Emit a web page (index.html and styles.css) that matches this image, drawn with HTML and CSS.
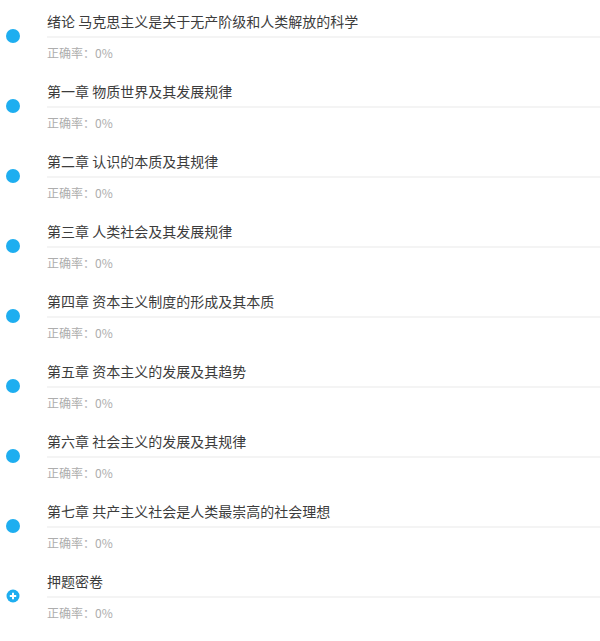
FILE: index.html
```html
<!DOCTYPE html>
<html lang="zh">
<head>
<meta charset="utf-8">
<link rel="stylesheet" href="styles.css">
</head>
<body>
<ul class="list">
  <li class="row"><span class="mark"><span class="dot"></span></span><div class="body"><div class="title">绪论 马克思主义是关于无产阶级和人类解放的科学</div><div class="sub">正确率：0%</div></div></li>
  <li class="row"><span class="mark"><span class="dot"></span></span><div class="body"><div class="title">第一章 物质世界及其发展规律</div><div class="sub">正确率：0%</div></div></li>
  <li class="row"><span class="mark"><span class="dot"></span></span><div class="body"><div class="title">第二章 认识的本质及其规律</div><div class="sub">正确率：0%</div></div></li>
  <li class="row"><span class="mark"><span class="dot"></span></span><div class="body"><div class="title">第三章 人类社会及其发展规律</div><div class="sub">正确率：0%</div></div></li>
  <li class="row"><span class="mark"><span class="dot"></span></span><div class="body"><div class="title">第四章 资本主义制度的形成及其本质</div><div class="sub">正确率：0%</div></div></li>
  <li class="row"><span class="mark"><span class="dot"></span></span><div class="body"><div class="title">第五章 资本主义的发展及其趋势</div><div class="sub">正确率：0%</div></div></li>
  <li class="row"><span class="mark"><span class="dot"></span></span><div class="body"><div class="title">第六章 社会主义的发展及其规律</div><div class="sub">正确率：0%</div></div></li>
  <li class="row"><span class="mark"><span class="dot"></span></span><div class="body"><div class="title">第七章 共产主义社会是人类最崇高的社会理想</div><div class="sub">正确率：0%</div></div></li>
  <li class="row"><span class="mark"><svg class="plus" width="14" height="14" viewBox="0 0 14 14"><circle cx="7" cy="7" r="6.5" fill="#1eaef0"/><path d="M7 3.8v6.4M3.8 7h6.4" stroke="#fff" stroke-width="2" stroke-linecap="butt"/></svg></span><div class="body"><div class="title">押题密卷</div><div class="sub">正确率：0%</div></div></li>
</ul>
</body>
</html>
```
FILE: styles.css
```css
html, body {
  margin: 0;
  padding: 0;
  background: #fff;
}
body {
  font-family: "Noto Sans CJK SC", "Noto Sans", sans-serif;
}
.list {
  list-style: none;
  margin: 0;
  padding: 0;
}
.row {
  display: flex;
  align-items: center;
  height: 70px;
}
.mark {
  width: 47px;
  flex: none;
  display: flex;
  align-items: center;
  padding-left: 6px;
  padding-top: 1px;
  box-sizing: border-box;
}
.dot {
  width: 14px;
  height: 14px;
  border-radius: 50%;
  background: #1eaef0;
}
.plus {
  display: block;
}
.body {
  flex: 1;
  align-self: stretch;
  display: flex;
  flex-direction: column;
}
.title {
  font-size: 14px;
  line-height: 20px;
  color: #3c3c3c;
  padding-top: 11px;
  padding-bottom: 5px;
  border-bottom: 2px solid #f4f4f4;
}
.sub {
  font-size: 12px;
  line-height: 30px;
  color: #adadad;
}
```
